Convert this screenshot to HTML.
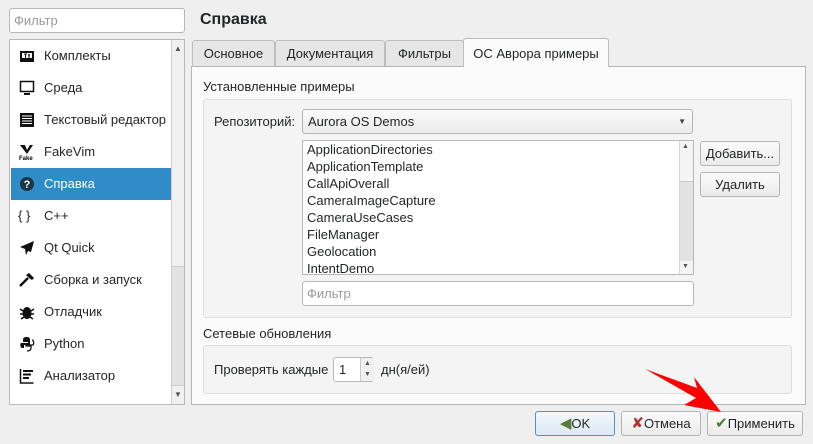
<!DOCTYPE html>
<html><head><meta charset="utf-8"><style>
*{box-sizing:border-box;margin:0;padding:0}
body{width:813px;height:444px;background:#efefef;font-family:"Liberation Sans","DejaVu Sans",sans-serif;font-size:13px;color:#232627;position:relative;overflow:hidden}
.a{position:absolute}
.inp{position:absolute;background:#fff;border:1px solid #b8b8b8;border-radius:3px}
.ph{color:#9a9a9a;position:absolute;left:4px;top:4px}
.it{position:absolute;left:1px;width:160px;height:32px;line-height:32px;padding-left:33px;white-space:nowrap}
.ic{position:absolute;left:8px;top:8px;width:16px;height:16px}
.tab{position:absolute;top:40px;height:26px;border:1px solid #bdbdbd;border-bottom:none;background:#e6e6e6;border-radius:3px 3px 0 0;text-align:center;line-height:26px}
.btn{position:absolute;height:25px;border:1px solid #b5b5b5;border-radius:3px;background:linear-gradient(#fbfbfb,#ebebeb);text-align:center;line-height:23px}
.grp{position:absolute;border:1px solid #dedede;border-radius:3px;background:#f4f4f4}
.li{position:absolute;left:4px;white-space:nowrap}
</style></head><body>
<div class="inp" style="left:9px;top:8px;width:176px;height:25px"><span class="ph">Фильтр</span></div>
<div class="a" style="left:9px;top:39px;width:176px;height:366px;background:#fff;border:1px solid #b8b8b8;overflow:hidden">
 <div class="a" style="left:161px;top:0;width:14px;height:364px;background:#f0f0f0;border-left:1px solid #d0d0d0"></div>
 <div class="a" style="left:162px;top:226px;width:13px;height:120px;background:#e2e2e2;border-top:1px solid #ccc;border-bottom:1px solid #ccc"></div>
 <div class="a" style="left:164px;top:4px;font-size:8px;color:#555">▲</div>
 <div class="a" style="left:164px;top:350px;font-size:8px;color:#555">▼</div>
 <div class="it" style="top:0"><svg class="ic" viewBox="0 0 16 16"><rect x="1" y="3" width="14" height="11" fill="#111"/><rect x="3" y="5" width="10" height="5" fill="#fff"/><path d="M5 6h3M6.5 6v4M10 6v4M9 7h2" stroke="#111"/></svg>Комплекты</div>
 <div class="it" style="top:32px"><svg class="ic" viewBox="0 0 16 16"><rect x="1.5" y="1.5" width="13" height="10" fill="none" stroke="#111" stroke-width="1.5"/><rect x="5" y="13" width="6" height="2" fill="#111"/></svg>Среда</div>
 <div class="it" style="top:64px"><svg class="ic" viewBox="0 0 16 16"><rect x="1" y="1" width="14" height="14" fill="#111"/><path d="M3 4h10M3 6.5h10M3 9h10M3 11.5h10" stroke="#fff"/></svg>Текстовый редактор</div>
 <div class="it" style="top:96px"><svg class="ic" viewBox="0 0 16 16"><path d="M1 1h5l2 5 3-5h3l-6 9z" fill="#111"/><text x="0" y="16" font-size="6" font-family="Liberation Sans" font-weight="bold">Fake</text></svg>FakeVim</div>
 <div class="it" style="top:128px;background:#308cc6;color:#fff"><svg class="ic" viewBox="0 0 16 16"><circle cx="8" cy="8" r="7" fill="#1a3548"/><text x="8" y="12" font-size="11" font-weight="bold" fill="#fff" text-anchor="middle" font-family="Liberation Sans">?</text></svg>Справка</div>
 <div class="it" style="top:160px"><span class="a" style="left:7px;top:0;font-size:13px">{ }</span>C++</div>
 <div class="it" style="top:192px"><svg class="ic" viewBox="0 0 16 16"><path d="M15 1L1 7l5 2 1 6 2-4 3 1z" fill="#111"/></svg>Qt Quick</div>
 <div class="it" style="top:224px"><svg class="ic" viewBox="0 0 16 16"><path d="M1 14l8-8" stroke="#111" stroke-width="2.5"/><path d="M7 3l3-2 5 5-2 2-3-2z" fill="#111"/></svg>Сборка и запуск</div>
 <div class="it" style="top:256px"><svg class="ic" viewBox="0 0 16 16"><ellipse cx="8" cy="9" rx="4.5" ry="6" fill="#111"/><path d="M1 5l3 2M15 5l-3 2M1 10h3M15 10h-3M2 15l3-2M14 15l-3-2" stroke="#111" stroke-width="1.5"/></svg>Отладчик</div>
 <div class="it" style="top:288px"><svg class="ic" viewBox="0 0 16 16"><path d="M8 1c-3 0-4 1-4 3v2h5v1H2c-1 0-1 5 1 5h2V9h6V4c0-2-1-3-3-3z" fill="#111"/><path d="M8 15c3 0 4-1 4-3v-2H7V9h7c1 0 1-5-1-5" fill="none" stroke="#111" stroke-width="1.3"/></svg>Python</div>
 <div class="it" style="top:320px"><svg class="ic" viewBox="0 0 16 16"><path d="M1.5 1v14h13" fill="none" stroke="#111" stroke-width="1.5"/><path d="M4 3h10M4 6.5h8M4 10h6" stroke="#111" stroke-width="2"/></svg>Анализатор</div>
</div>
<div class="a" style="left:200px;top:11px;font-size:16px;font-weight:bold">Справка</div>
<div class="tab" style="left:192px;width:83px">Основное</div>
<div class="tab" style="left:275px;width:110px">Документация</div>
<div class="tab" style="left:385px;width:79px">Фильтры</div>
<div class="a" style="left:191px;top:66px;width:615px;height:339px;background:#fbfbfb;border:1px solid #b5b5b5"></div>
<div class="tab" style="left:463px;top:38px;width:146px;height:29px;background:#fbfbfb;z-index:2;line-height:29px">ОС Аврора примеры</div>
<div class="a" style="left:203px;top:79px">Установленные примеры</div>
<div class="grp" style="left:203px;top:99px;width:589px;height:219px"></div>
<div class="a" style="left:214px;top:114px">Репозиторий:</div>
<div class="btn" style="left:302px;top:109px;width:391px;text-align:left;padding-left:5px">Aurora OS Demos<span class="a" style="right:6px;top:0;font-size:8px;color:#444">▼</span></div>
<div class="a" style="left:302px;top:140px;width:392px;height:135px;background:#fff;border:1px solid #b8b8b8;overflow:hidden">
 <div class="a" style="left:376px;top:0;width:14px;height:133px;background:#f4f4f4;border-left:1px solid #d8d8d8"></div>
 <div class="a" style="left:377px;top:40px;width:13px;height:80px;background:#e2e2e2;border-top:1px solid #ccc"></div>
 <div class="a" style="left:379px;top:2px;font-size:7px;color:#555">▲</div>
 <div class="a" style="left:379px;top:122px;font-size:7px;color:#555">▼</div>
 <div class="li" style="top:1px">ApplicationDirectories</div>
 <div class="li" style="top:18px">ApplicationTemplate</div>
 <div class="li" style="top:35px">CallApiOverall</div>
 <div class="li" style="top:52px">CameraImageCapture</div>
 <div class="li" style="top:69px">CameraUseCases</div>
 <div class="li" style="top:86px">FileManager</div>
 <div class="li" style="top:103px">Geolocation</div>
 <div class="li" style="top:120px">IntentDemo</div>
</div>
<div class="btn" style="left:700px;top:141px;width:80px">Добавить...</div>
<div class="btn" style="left:700px;top:172px;width:80px">Удалить</div>
<div class="inp" style="left:302px;top:281px;width:392px;height:25px"><span class="ph">Фильтр</span></div>
<div class="a" style="left:203px;top:326px">Сетевые обновления</div>
<div class="grp" style="left:203px;top:345px;width:589px;height:49px"></div>
<div class="a" style="left:214px;top:362px">Проверять каждые</div>
<div class="inp" style="left:333px;top:357px;width:41px;height:25px"><span class="a" style="left:5px;top:4px">1</span><span class="a" style="left:26px;top:0;width:14px;height:23px;border-left:1px solid #ccc;background:#f0f0f0;font-size:7px;color:#555;line-height:11px;text-align:center">▲<br>▼</span></div>
<div class="a" style="left:381px;top:362px">дн(я/ей)</div>
<div class="btn" style="left:535px;top:411px;width:80px;border-color:#5a8fc0;background:linear-gradient(#f3f8fc,#dde9f3)"><span style="color:#5a7a3a;font-size:15px">◀</span>OK</div>
<div class="btn" style="left:621px;top:411px;width:80px"><span style="color:#b03030;font-weight:bold;font-size:15px">✘</span>Отмена</div>
<div class="btn" style="left:707px;top:411px;width:96px"><span style="color:#4a7a3a;font-weight:bold;font-size:15px">✔</span>Применить</div>
<svg class="a" style="left:0;top:0" width="813" height="444"><polygon points="645,369 697,388 694,377 721,412 684,405 696,398" fill="#ff0000"/></svg>
</body></html>
